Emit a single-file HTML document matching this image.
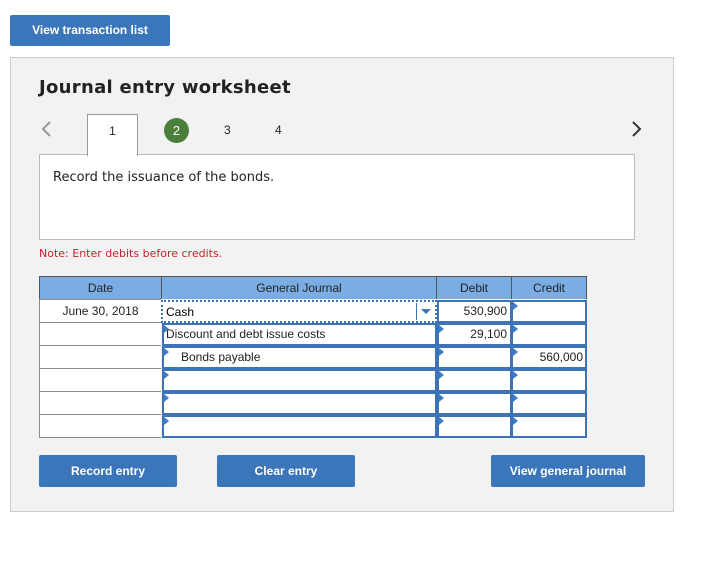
<!DOCTYPE html>
<html><head><meta charset="utf-8"><style>
*{box-sizing:border-box;margin:0;padding:0}
body{width:703px;height:563px;background:#fff;position:relative;font-family:"Liberation Sans",Arial,sans-serif;overflow:hidden}
.a{position:absolute}
.btn{position:absolute;background:#3b76bb;color:#fff;font-weight:bold;font-size:12px;text-align:center;border-radius:2px;font-family:"Liberation Sans",Arial,sans-serif}
.v{font-family:"DejaVu Sans",Verdana,sans-serif}
.cell{position:absolute;border:1px solid #8a8a8a;background:#fff;font-size:12px;color:#222}
.hd{position:absolute;background:#79ade4;border:1px solid #555;font-size:12px;color:#222;text-align:center;line-height:22px}
.in{position:absolute;border:2px solid #3d74b8;background:#fff;font-size:12px;color:#222;line-height:19px}
.tri{position:absolute;left:0;top:0;width:0;height:0;border-top:4px solid transparent;border-bottom:4px solid transparent;border-left:5px solid #3d7cc9}
</style></head><body>
<div class="btn" style="left:10px;top:15px;width:160px;height:31px;line-height:31px">View transaction list</div>
<div class="a" style="left:10px;top:57px;width:664px;height:455px;background:#f2f2f2;border:1px solid #ccc"></div>
<div class="a v" style="left:39px;top:77px;font-size:18px;font-weight:bold;color:#222;letter-spacing:0.3px">Journal entry worksheet</div>
<svg class="a" style="left:40px;top:120px" width="14" height="18"><polyline points="10,2 3,9 10,16" fill="none" stroke="#999" stroke-width="2"/></svg>
<svg class="a" style="left:630px;top:120px" width="14" height="18"><polyline points="3,2 10,9 3,16" fill="none" stroke="#333" stroke-width="2"/></svg>
<div class="a" style="left:39px;top:154px;width:596px;height:86px;background:#fff;border:1px solid #bbb"></div>
<div class="a" style="left:87px;top:114px;width:51px;height:42px;background:#fff;border:1px solid #999;border-bottom:none;text-align:center;line-height:32px;font-size:12px;color:#222">1</div>
<div class="a" style="left:164px;top:118px;width:25px;height:25px;border-radius:50%;background:#4a7f3c;color:#fff;text-align:center;line-height:25px;font-size:13px">2</div>
<div class="a" style="left:224px;top:123px;font-size:12px;color:#222">3</div>
<div class="a" style="left:275px;top:123px;font-size:12px;color:#222">4</div>
<div class="a v" style="left:53px;top:170px;font-size:13px;color:#222">Record the issuance of the bonds.</div>
<div class="a v" style="left:39px;top:247px;font-size:11px;color:#c0262d">Note: Enter debits before credits.</div>

<div class="hd" style="left:39px;top:276px;width:123px;height:24px">Date</div>
<div class="hd" style="left:161px;top:276px;width:276px;height:24px">General Journal</div>
<div class="hd" style="left:436px;top:276px;width:76px;height:24px">Debit</div>
<div class="hd" style="left:511px;top:276px;width:76px;height:24px">Credit</div>

<div class="cell" style="left:39px;top:299px;width:123px;height:24px;text-align:center;line-height:23px">June 30, 2018</div>
<div class="cell" style="left:39px;top:322px;width:123px;height:24px"></div>
<div class="cell" style="left:39px;top:345px;width:123px;height:24px"></div>
<div class="cell" style="left:39px;top:368px;width:123px;height:24px"></div>
<div class="cell" style="left:39px;top:391px;width:123px;height:24px"></div>
<div class="cell" style="left:39px;top:414px;width:123px;height:24px"></div>
<div class="a" style="left:161px;top:299px;width:426px;height:139px;background:#f2f2f2"></div>

<div class="a" style="left:161px;top:300px;width:276px;height:23px;background:#fff;border:2px dotted #3d74b8;font-size:12px;line-height:21px;padding-left:3px">Cash<div class="a" style="left:253px;top:1px;width:1px;height:17px;background:#3d74b8"></div><div class="a" style="left:258px;top:7px;border-left:5px solid transparent;border-right:5px solid transparent;border-top:5px solid #3d74b8"></div></div>
<div class="in" style="left:437px;top:300px;width:75px;height:23px;text-align:right;padding-right:3px">530,900</div>
<div class="in" style="left:511px;top:300px;width:76px;height:23px"><div class="tri"></div></div>
<div class="in" style="left:162px;top:323px;width:275px;height:23px;padding-left:2px">Discount and debt issue costs<div class="tri"></div></div>
<div class="in" style="left:437px;top:323px;width:75px;height:23px;text-align:right;padding-right:3px">29,100<div class="tri"></div></div>
<div class="in" style="left:511px;top:323px;width:76px;height:23px"><div class="tri"></div></div>
<div class="in" style="left:162px;top:346px;width:275px;height:23px;padding-left:17px">Bonds payable<div class="tri"></div></div>
<div class="in" style="left:437px;top:346px;width:75px;height:23px"><div class="tri"></div></div>
<div class="in" style="left:511px;top:346px;width:76px;height:23px;text-align:right;padding-right:2px">560,000<div class="tri"></div></div>
<div class="in" style="left:162px;top:369px;width:275px;height:23px"><div class="tri"></div></div>
<div class="in" style="left:437px;top:369px;width:75px;height:23px"><div class="tri"></div></div>
<div class="in" style="left:511px;top:369px;width:76px;height:23px"><div class="tri"></div></div>
<div class="in" style="left:162px;top:392px;width:275px;height:23px"><div class="tri"></div></div>
<div class="in" style="left:437px;top:392px;width:75px;height:23px"><div class="tri"></div></div>
<div class="in" style="left:511px;top:392px;width:76px;height:23px"><div class="tri"></div></div>
<div class="in" style="left:162px;top:415px;width:275px;height:23px"><div class="tri"></div></div>
<div class="in" style="left:437px;top:415px;width:75px;height:23px"><div class="tri"></div></div>
<div class="in" style="left:511px;top:415px;width:76px;height:23px"><div class="tri"></div></div>

<div class="btn" style="left:39px;top:455px;width:138px;height:32px;line-height:32px">Record entry</div>
<div class="btn" style="left:217px;top:455px;width:138px;height:32px;line-height:32px">Clear entry</div>
<div class="btn" style="left:491px;top:455px;width:154px;height:32px;line-height:32px">View general journal</div>
</body></html>
